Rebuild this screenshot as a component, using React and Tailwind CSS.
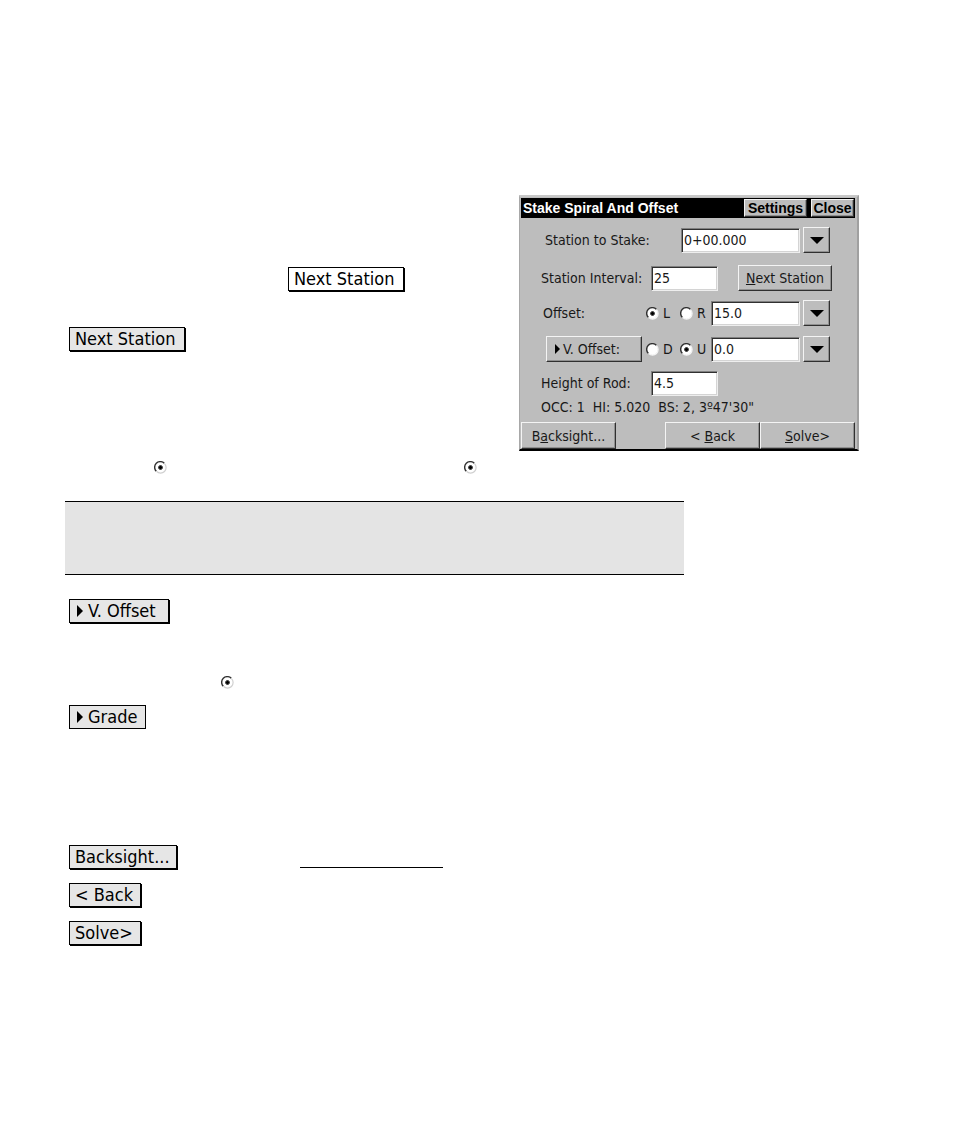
import React from "react";

const raised =
  "border border-t-[#f4f4f4] border-l-[#f4f4f4] border-r-[#303030] border-b-[#303030] bg-[#bdbdbd] shadow-[inset_-1px_-1px_0_#909090]";

function Radio({ name, checked, label, plain }) {
  return (
    <label className="relative flex items-center gap-1">
      <input
        type="radio"
        name={name}
        defaultChecked={checked}
        aria-label={label}
        className="absolute left-0 size-3 opacity-0"
      />
      <svg width="13" height="13" viewBox="0 0 13 13" aria-hidden="true">
        <circle cx="6.5" cy="6.5" r="5.4" fill="#ffffff" />
        <path d="M2.3 10.3A5.4 5.4 0 0 1 10.3 2.3" fill="none" stroke="#303030" strokeWidth="1.4" />
        <path d="M10.5 2.7A5.4 5.4 0 0 1 2.7 10.5" fill="none" stroke={plain ? "#d0d0d0" : "#f4f4f4"} strokeWidth="1.2" />
        {checked && <path d="M5.5 4.5h2v1h1v2h-1v1h-2v-1h-1v-2h1z" fill="#000000" stroke="#000000" strokeWidth="0.4" />}
      </svg>
      {!plain && <span className="w-4">{label}</span>}
    </label>
  );
}

function Field({ id, value, className, label }) {
  return (
    <input
      id={id}
      aria-label={label}
      defaultValue={value}
      className={
        "h-[25px] min-w-0 border border-t-[#808080] border-l-[#808080] border-r-[#eeeeee] border-b-[#eeeeee] bg-white px-[2px] pb-px text-[14px] shadow-[inset_1px_1px_0_#303030,inset_-1px_-1px_0_#d4d4d4] outline-none " +
        className
      }
    />
  );
}

function MenuButton({ label }) {
  return (
    <button type="button" aria-label={label} className={"flex h-[26px] w-[27px] items-center justify-center " + raised}>
      <svg width="14" height="7" viewBox="0 0 14 7" aria-hidden="true">
        <path d="M0 0h14L7 7z" fill="#000000" />
      </svg>
    </button>
  );
}

function RightArrow({ className }) {
  return (
    <svg viewBox="0 0 6 12" className={className} aria-hidden="true">
      <path d="M0 0v12l6-6z" fill="#000000" />
    </svg>
  );
}

function DocButton({ children, arrow, white, flat, className }) {
  return (
    <button
      type="button"
      className={
        "flex h-6 items-center gap-[5px] border border-black px-[5px] text-[18px] leading-5 whitespace-nowrap " +
        (white ? "bg-white " : "bg-[#e6e6e6] ") +
        (flat ? "" : "shadow-[1px_1px_0_#000000] ") +
        className
      }
    >
      {arrow && <RightArrow className="ml-[2px] h-3 w-[6px]" />}
      {children}
    </button>
  );
}

function StakeDialog() {
  return (
    <section
      aria-label="Stake Spiral And Offset"
      className="flex h-[256px] w-[340px] shrink-0 flex-col border-t-2 border-r-2 border-b-2 border-l border-t-[#c8c8c8] border-r-[#a0a0a0] border-b-black border-l-[#a8a8a8] bg-[#bdbdbd] pt-px pr-px pl-px text-[14px] leading-4 text-[#181818]"
    >
      <header className="mr-px flex h-5 items-center gap-1 bg-black pr-px pl-[2px] font-['Liberation_Sans',sans-serif] text-[14px] font-bold text-white">
        <h1 className="mr-auto">Stake Spiral And Offset</h1>
        <button type="button" className={"h-[18px] w-[63px] text-black " + raised}>Settings</button>
        <button type="button" className={"h-[18px] w-[43px] text-black " + raised}>Close</button>
      </header>

      <div className="mt-[9px] flex h-[26px] items-center pl-6">
        <label htmlFor="station" className="w-[136px]">Station to Stake:</label>
        <Field id="station" value="0+00.000" className="w-[119px]" />
        <div className="w-[3px]" />
        <MenuButton label="Station options" />
      </div>

      <div className="mt-3 flex h-[26px] items-center pl-5">
        <label htmlFor="interval" className="w-[110px] whitespace-nowrap">Station Interval:</label>
        <Field id="interval" value="25" className="w-[67px]" />
        <button type="button" className={"ml-5 h-[26px] w-[94px] " + raised}>
          <u>N</u>ext Station
        </button>
      </div>

      <div className="mt-[9px] flex h-[26px] items-center pl-[22px]">
        <span className="w-[103px]">Offset:</span>
        <div className="flex w-[65px] gap-px">
          <Radio name="offset" label="L" checked />
          <Radio name="offset" label="R" />
        </div>
        <Field label="Offset" value="15.0" className="w-[89px]" />
        <div className="w-[3px]" />
        <MenuButton label="Offset options" />
      </div>

      <div className="mt-[10px] flex h-[26px] items-center pl-[25px]">
        <button type="button" className={"mr-1 flex h-[26px] w-[96px] items-center gap-[3px] pl-2 " + raised}>
          <RightArrow className="h-[10px] w-[5px]" />
          V. Offset:
        </button>
        <div className="flex w-[65px] gap-px">
          <Radio name="voffset" label="D" />
          <Radio name="voffset" label="U" checked />
        </div>
        <Field label="Vertical offset" value="0.0" className="w-[89px]" />
        <div className="w-[3px]" />
        <MenuButton label="Vertical offset options" />
      </div>

      <div className="mt-2 flex h-[26px] items-center pl-5">
        <label htmlFor="rod" className="w-[110px]">Height of Rod:</label>
        <Field id="rod" value="4.5" className="w-[67px]" />
      </div>

      <p className="mt-[3px] pl-5 whitespace-pre">OCC: 1  HI: 5.020  BS: 2, 3º47'30"</p>

      <footer className="mt-auto mr-px flex">
        <button type="button" className={"mr-auto h-[27px] w-[95px] " + raised}>B<u>a</u>cksight...</button>
        <button type="button" className={"h-[27px] w-[95px] " + raised}>&lt; <u>B</u>ack</button>
        <button type="button" className={"h-[27px] w-[95px] " + raised}><u>S</u>olve&gt;</button>
      </footer>
    </section>
  );
}

export default function App() {
  return (
    <main className="min-h-screen bg-white pt-[195px] pr-[95px] pb-48 pl-[65px] font-['DejaVu_Sans_Condensed','DejaVu_Sans',sans-serif] font-stretch-condensed text-black">
      <div className="flex justify-between">
        <div className="pt-[72px] pl-1">
          <div className="pl-[219px]">
            <DocButton white className="w-[116px]">Next Station</DocButton>
          </div>
          <div className="mt-[36px] flex">
            <DocButton className="w-[116px]">Next Station</DocButton>
          </div>
        </div>
        <StakeDialog />
      </div>

      <div className="mt-[10px] flex gap-[297px] pl-[89px]">
        <Radio name="side-left" label="L" checked plain />
        <Radio name="side-right" label="R" checked plain />
      </div>

      <div className="mt-[27px] h-[74px] w-full max-w-[619px] border-y border-black bg-[#e4e4e4]" />

      <div className="mt-6 flex flex-col items-start pl-1">
        <DocButton arrow className="w-[100px]">V. Offset</DocButton>
        <div className="mt-[53px] pl-[152px]">
          <Radio name="vertical" label="U" checked plain />
        </div>
        <div className="mt-4">
          <DocButton arrow flat className="w-[77px]">Grade</DocButton>
        </div>
        <div className="mt-[116px] flex items-end">
          <DocButton className="w-[108px]">Backsight...</DocButton>
          <div className="mb-px ml-[123px] w-[143px] border-b border-black" />
        </div>
        <div className="mt-[14px]">
          <DocButton className="w-[72px]">&lt; Back</DocButton>
        </div>
        <div className="mt-[14px]">
          <DocButton className="w-[72px]">Solve&gt;</DocButton>
        </div>
      </div>
    </main>
  );
}
